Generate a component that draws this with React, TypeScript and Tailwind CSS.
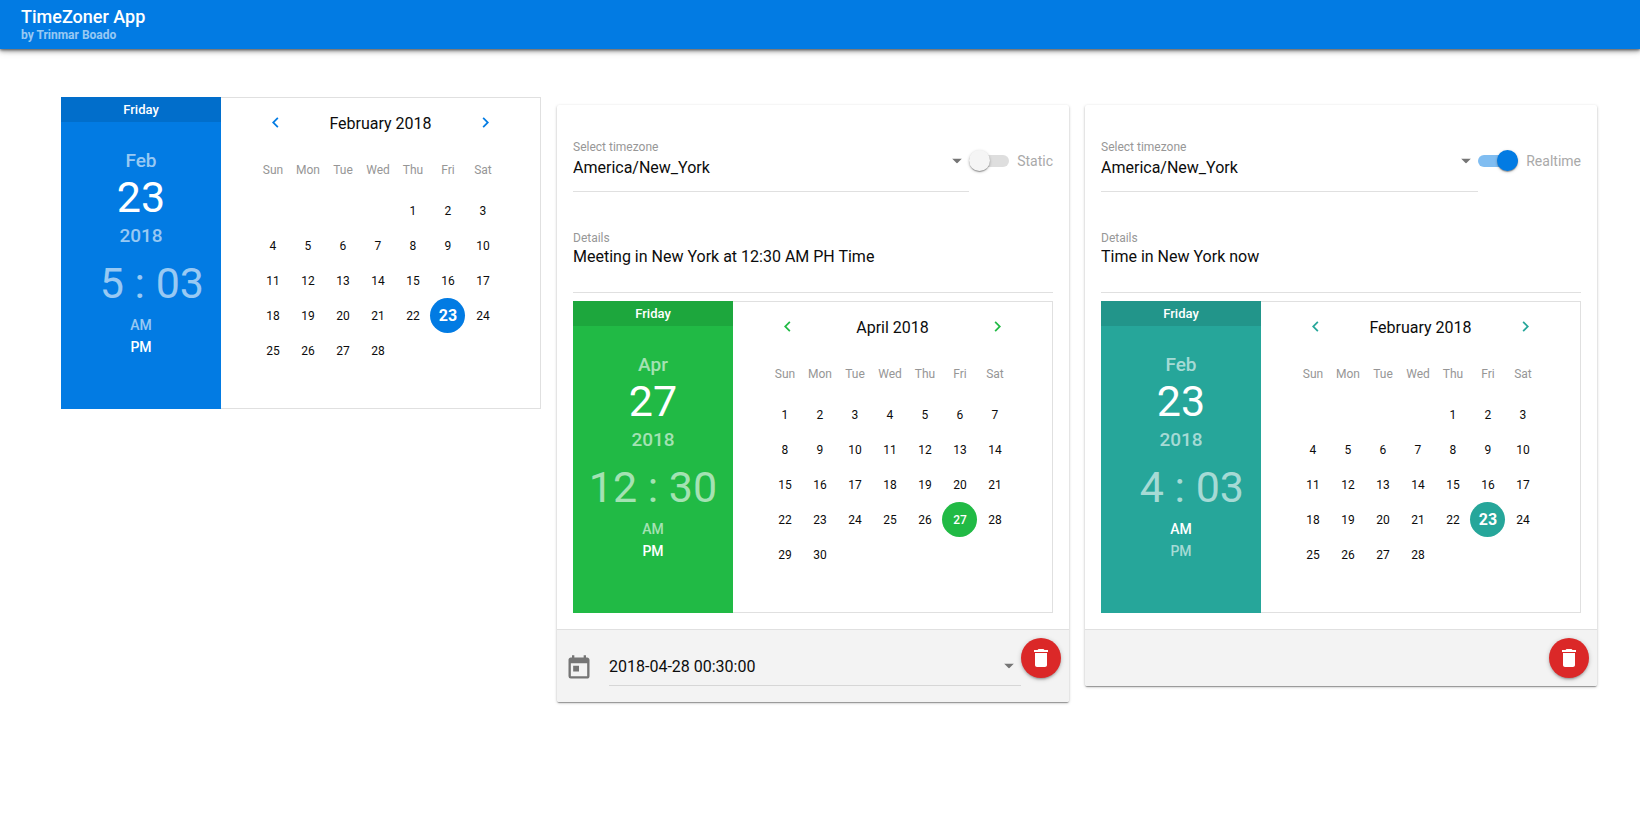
import { useId, useState } from "react";
import { MdChevronLeft, MdChevronRight, MdDelete, MdToday } from "react-icons/md";

type Tone = "blue" | "green" | "teal";

const TONES: Record<Tone, { bg: string; text: string }> = {
  blue: { bg: "bg-[#027be3]", text: "text-[#027be3]" },
  green: { bg: "bg-[#21ba45]", text: "text-[#21ba45]" },
  teal: { bg: "bg-[#26a69a]", text: "text-[#26a69a]" },
};

const WEEKDAYS = ["Sun", "Mon", "Tue", "Wed", "Thu", "Fri", "Sat"];

interface PickerProps {
  tone: Tone;
  weekday: string;
  monthShort: string;
  month: string;
  year: number;
  day: number;
  hour: number;
  minute: string;
  period: "AM" | "PM";
  firstDay: number;
  days: number;
  isToday?: boolean;
}

function DateTimePicker(p: PickerProps) {
  const tone = TONES[p.tone];
  const blanks = Array.from({ length: p.firstDay }, (_, i) => i);
  const days = Array.from({ length: p.days }, (_, i) => i + 1);
  const selectedClass = p.isToday ? "text-base font-bold" : "text-xs font-medium";

  return (
    <div className="flex min-h-[312px]">
      <div className={`w-1/3 text-center font-medium text-white ${tone.bg}`}>
        <div className="h-[25px] bg-black/10 text-[13px] leading-[25px]">{p.weekday}</div>
        <div className="flex flex-col items-center pt-[27px]">
          <button className="text-[19px] leading-6 text-white/60">{p.monthShort}</button>
          <button className="pb-0.5 text-[43px] leading-[49px] font-normal">{p.day}</button>
          <button className="text-[19px] leading-6 text-white/60">{p.year}</button>
          <div className="mt-2.5 flex text-[43px] leading-[50px] font-normal whitespace-pre text-white/60">
            <button className="min-w-[46px] text-right">{p.hour}</button>
            <span> : </span>
            <button className="min-w-[46px] text-left">{p.minute}</button>
          </div>
          <div className="mt-1.5 flex flex-col text-sm leading-[22px]">
            <button className={p.period === "AM" ? "text-white" : "text-white/60"}>AM</button>
            <button className={p.period === "PM" ? "text-white" : "text-white/60"}>PM</button>
          </div>
        </div>
      </div>

      <div className="flex-1 border border-l-0 border-[#e0e0e0]">
        <div className="mx-auto w-[250px]">
          <div className="flex h-[49px] items-center justify-between">
            <button aria-label="Previous month" className={`flex w-10 justify-center ${tone.text}`}>
              <MdChevronLeft size={21} />
            </button>
            <div className="pt-0.5 text-base">
              {p.month} {p.year}
            </div>
            <button aria-label="Next month" className={`flex w-10 justify-center ${tone.text}`}>
              <MdChevronRight size={21} />
            </button>
          </div>
          <div className="grid w-[245px] grid-cols-7 text-center text-xs leading-[46px] text-[#969696]">
            {WEEKDAYS.map((d) => (
              <div key={d}>{d}</div>
            ))}
          </div>
          <div className="grid w-[245px] grid-cols-7 text-xs">
            {blanks.map((b) => (
              <span key={`b${b}`} />
            ))}
            {days.map((d) => (
              <button
                key={d}
                className={`size-[35px] rounded-full ${
                  d === p.day ? `text-white ${tone.bg} ${selectedClass}` : ""
                }`}
              >
                {d}
              </button>
            ))}
          </div>
        </div>
      </div>
    </div>
  );
}

function Caret() {
  return (
    <svg
      viewBox="0 0 10 5"
      className="pointer-events-none absolute top-1/2 right-[7px] w-[10px] -translate-y-1/2 fill-[#757575]"
      aria-hidden="true"
    >
      <path d="M0 0h10L5 5z" />
    </svg>
  );
}

interface ZoneCardProps {
  details: string;
  realtime: boolean;
  date?: string;
  picker: PickerProps;
}

function ZoneCard({ details, realtime, date, picker }: ZoneCardProps) {
  const id = useId();
  const [on, setOn] = useState(realtime);
  const [text, setText] = useState(details);

  return (
    <article className="w-[512px] rounded-xs bg-white shadow-[0_1px_3px_rgba(0,0,0,0.25),0_1px_1px_rgba(0,0,0,0.18),0_2px_1px_-1px_rgba(0,0,0,0.15)]">
      <div className="p-4">
        <div className="flex items-center">
          <div className="relative mt-[18px] mb-2 flex-1 border-b border-[#e0e0e0] pb-[11px]">
            <label htmlFor={`${id}-zone`} className="block text-xs leading-4 text-[#979797]">
              Select timezone
            </label>
            <select
              id={`${id}-zone`}
              className="mt-px block h-6 w-full appearance-none bg-transparent text-base leading-6 outline-none"
            >
              <option>America/New_York</option>
            </select>
            <div className="pointer-events-none absolute inset-x-0 top-0 h-[44px]">
              <Caret />
            </div>
          </div>
          <label className="flex items-center gap-2 text-sm text-[#a9a9a9]">
            <span className="relative flex h-[21px] w-10 items-center">
              <input
                type="checkbox"
                role="switch"
                checked={on}
                onChange={(e) => setOn(e.target.checked)}
                className="peer absolute inset-0 m-0 size-full cursor-pointer appearance-none"
              />
              <span className="pointer-events-none h-3 w-full rounded-full bg-[#dedede] peer-checked:bg-[#80bdf1]" />
              <span className="pointer-events-none absolute left-0 size-[21px] rounded-full bg-[#f5f5f5] shadow-[0_1px_3px_rgba(0,0,0,0.25),0_1px_1px_rgba(0,0,0,0.18),0_2px_1px_-1px_rgba(0,0,0,0.15)] peer-checked:right-0 peer-checked:left-auto peer-checked:bg-[#027be3]" />
            </span>
            {on ? "Realtime" : "Static"}
          </label>
        </div>
        <div className="mt-[30px] mb-2 border-b border-[#e0e0e0] pb-6">
          <label htmlFor={`${id}-details`} className="block text-xs leading-4 text-[#979797]">
            Details
          </label>
          <input
            id={`${id}-details`}
            value={text}
            onChange={(e) => setText(e.target.value)}
            className="block h-[22px] w-full bg-transparent text-base leading-[22px] outline-none"
          />
        </div>
        <DateTimePicker {...picker} />
      </div>
      <footer className="flex items-start justify-end rounded-b-xs border-t border-[#e0e0e0] bg-[#f3f3f3] p-2">
        {date && (
          <>
            <MdToday size={28} className="mt-4 mr-4 text-[#757575]" aria-hidden="true" />
            <div className="relative mb-2 flex-1 border-b border-[#d6d6d6] pt-[17px] pb-1.5">
              <select
                aria-label="Date and time"
                className="block h-6 w-full appearance-none bg-transparent text-base leading-6 outline-none"
              >
                <option>{date}</option>
              </select>
              <div className="pointer-events-none absolute inset-x-0 top-4 h-6">
                <Caret />
              </div>
            </div>
          </>
        )}
        <button
          aria-label="Delete"
          className="flex size-10 items-center justify-center rounded-full bg-[#db2828] text-white shadow-[0_1px_5px_rgba(0,0,0,0.2),0_2px_2px_rgba(0,0,0,0.14),0_3px_1px_-2px_rgba(0,0,0,0.12)]"
        >
          <MdDelete size={24} />
        </button>
      </footer>
    </article>
  );
}

const february = {
  weekday: "Friday",
  monthShort: "Feb",
  month: "February",
  year: 2018,
  day: 23,
  minute: "03",
  firstDay: 4,
  days: 28,
  isToday: true,
};

export default function App() {
  return (
    <div className="min-h-screen bg-white font-[Roboto,sans-serif] text-[#0c0c0c]">
      <header className="relative h-[49px] bg-[#027be3] px-[21px] pt-[5px] text-white shadow-[0_1px_8px_rgba(0,0,0,0.25),0_2px_4px_rgba(0,0,0,0.35),0_1px_2px_rgba(0,0,0,0.35)]">
        <h1 className="text-lg leading-6 font-medium">TimeZoner App</h1>
        <p className="text-xs leading-3 font-bold text-white/60">by Trinmar Boado</p>
      </header>
      <main className="flex flex-wrap items-start justify-center pt-8 pl-0.5">
        <section className="w-[512px] p-4">
          <DateTimePicker {...february} tone="blue" hour={5} period="PM" />
        </section>
        <div className="mt-6 flex flex-wrap items-start justify-center gap-4">
          <ZoneCard
            details="Meeting in New York at 12:30 AM PH Time"
            realtime={false}
            date="2018-04-28 00:30:00"
            picker={{
              tone: "green",
              weekday: "Friday",
              monthShort: "Apr",
              month: "April",
              year: 2018,
              day: 27,
              hour: 12,
              minute: "30",
              period: "PM",
              firstDay: 0,
              days: 30,
            }}
          />
          <ZoneCard
            details="Time in New York now"
            realtime
            picker={{ ...february, tone: "teal", hour: 4, period: "AM" }}
          />
        </div>
      </main>
    </div>
  );
}
